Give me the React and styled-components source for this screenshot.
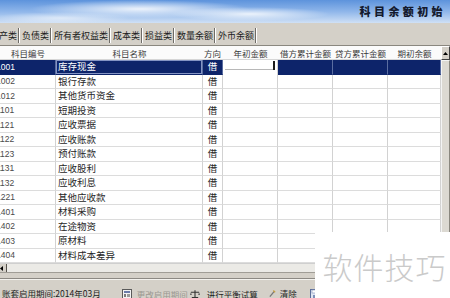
import React from "react";
import styled, { createGlobalStyle } from "styled-components";

const Global = createGlobalStyle`
  html, body { margin: 0; padding: 0; background: #d4d0c8; overflow: hidden; }
  * { box-sizing: border-box; }
`;

const CJK = `"Noto Sans CJK SC", "Noto Sans", sans-serif`;

const Window = styled.div`
  position: relative;
  width: 450px;
  height: 298px;
  overflow: hidden;
  display: flex;
  flex-direction: column;
  background: #d4d0c8;
  font-family: ${CJK};
`;

const Banner = styled.div`
  height: 23px;
  flex: none;
  display: flex;
  align-items: center;
  justify-content: flex-end;
  padding-right: 4px;
  background:
    radial-gradient(ellipse 110px 9px at 140px 9px, rgba(255,255,255,0.85), rgba(255,255,255,0) 100%),
    radial-gradient(ellipse 80px 7px at 250px 14px, rgba(255,255,255,0.8), rgba(255,255,255,0) 100%),
    radial-gradient(ellipse 70px 6px at 60px 18px, rgba(255,255,255,0.55), rgba(255,255,255,0) 100%),
    linear-gradient(180deg, #5d93dc 0%, #8fb6ea 50%, #cfe0f5 100%);
`;

const Title = styled.div`
  font-family: ${CJK};
  font-weight: 900;
  font-size: 11px;
  letter-spacing: 3.4px;
  color: #141a2e;
  line-height: 1;
`;

const TabBar = styled.div`
  height: 23px;
  flex: none;
  display: flex;
  align-items: flex-start;
  padding-top: 5px;
  border-bottom: 1px solid #8a877f;
`;

const Tab = styled.div`
  height: 15px;
  display: flex;
  align-items: center;
  padding: 0 ${(p) => (p.$first ? 1 : 1)}px 0 2px;
  font-size: 9px;
  color: #202020;
  white-space: nowrap;
  border-right: 1px solid #6e6b66;
  box-shadow: 1px 0 0 #ffffff;
  margin-right: 1px;
  overflow: hidden;
  span { margin-left: ${(p) => (p.$first ? "-12px" : "0")}; }
`;

const Body = styled.div`
  display: flex;
  flex: none;
  height: 217px;
`;

const Grid = styled.div`
  width: 441px;
  display: flex;
  flex-direction: column;
  background: #ffffff;
`;

const COLS = "56px 147px 20px 55px 55px 55px 53px";

const HeadRow = styled.div`
  height: 14px;
  display: grid;
  grid-template-columns: ${COLS};
  background: #fbfbfb;
  border-bottom: 1px solid #d6d6d6;
`;

const HeadCell = styled.div`
  font-size: 8.5px;
  color: #3a3a3a;
  display: flex;
  align-items: center;
  justify-content: ${(p) => (p.$right ? "flex-end" : "center")};
  padding-right: ${(p) => (p.$right ? "2px" : "0")};
  white-space: nowrap;
  overflow: hidden;
`;

const Row = styled.div`
  height: 14.5px;
  display: grid;
  grid-template-columns: ${COLS};
  background: ${(p) => (p.$sel ? "#0d246a" : "#ffffff")};
`;

const Cell = styled.div`
  border-right: 1px solid ${(p) => (p.$sel ? "#5a6da0" : "#d2d2d2")};
  border-bottom: 1px solid ${(p) => (p.$sel ? "#0d246a" : "#dcdcdc")};
  display: flex;
  align-items: center;
  justify-content: ${(p) => (p.$center ? "center" : "flex-start")};
  padding-left: ${(p) => (p.$pad ? 2 : 0)}px;
  font-size: 9.5px;
  color: ${(p) => (p.$sel ? "#ffffff" : "#262626")};
  white-space: nowrap;
  overflow: hidden;
  line-height: 1;
`;

const CodeCell = styled(Cell)`
  font-family: "Liberation Sans", Arial, sans-serif;
  font-size: 8.5px;
  color: ${(p) => (p.$sel ? "#ffffff" : "#4a4a4a")};
  span { margin-left: -4px; }
`;

const NameCell = styled(Cell)`
  box-shadow: ${(p) => (p.$sel ? "inset 0 0 0 1px #8494c4" : "none")};
`;

const EditCell = styled.div`
  background: #ffffff;
  border-right: 1px solid #d2d2d2;
  position: relative;
  &::after {
    content: "";
    position: absolute;
    right: 2px;
    top: 1px;
    width: 2px;
    height: 9px;
    background: #1b1b1b;
  }
  &::before {
    content: "";
    position: absolute;
    right: 2px;
    top: 9px;
    width: 50px;
    height: 1px;
    background: #b8b8b8;
  }
`;

const VScroll = styled.div`
  width: 9px;
  display: flex;
  flex-direction: column;
  background: #d4d0c8;
`;

const ScrollBtn = styled.div`
  height: 14px;
  background: #d4d0c8;
  border: 1px solid;
  border-color: #ffffff #404040 #404040 #ffffff;
  display: flex;
  align-items: center;
  justify-content: center;
`;

const Thumb = styled.div`
  flex: 1;
  background: #dcd9d2;
  border: 1px solid;
  border-color: #f4f4f4 #8a877f #8a877f #f4f4f4;
`;

const HScroll = styled.div`
  height: 10px;
  flex: none;
  display: flex;
  background: #ebeae6;
  border-top: 1px solid #cfcfcf;
  border-bottom: 1px solid #a09d96;
`;

const HBtn = styled.div`
  width: 7px;
  display: flex;
  align-items: center;
  border-right: 1px solid #55524c;
  background: #d4d0c8;
`;

const Gap = styled.div`
  height: 6px;
  flex: none;
  border-bottom: 1px solid #8c8983;
`;

const StatusBar = styled.div`
  flex: 1;
  display: flex;
  align-items: flex-start;
  padding: 9px 0 0 2px;
  border-top: 1px solid #f3f2ee;
  font-size: 8.5px;
  color: #1e1e1e;
  white-space: nowrap;
`;

const StatusItem = styled.div`
  display: flex;
  align-items: center;
  gap: ${(p) => p.$gap || 4}px;
  margin-left: ${(p) => p.$ml || 0}px;
  color: ${(p) => (p.$disabled ? "#9b9891" : "#1e1e1e")};
  line-height: 1;
`;

const Watermark = styled.div`
  position: absolute;
  left: 315px;
  top: 232px;
  right: 0;
  bottom: 0;
  background: #ffffff;
  display: flex;
  align-items: center;
  justify-content: center;
  padding-left: 4px;
  padding-top: 2px;
  font-family: "Noto Sans CJK SC", sans-serif;
  font-size: 30px;
  font-weight: 300;
  color: #cacaca;
  letter-spacing: 1px;
`;

const rows = [
  ["1001", "库存现金"],
  ["1002", "银行存款"],
  ["1012", "其他货币资金"],
  ["1101", "短期投资"],
  ["1121", "应收票据"],
  ["1122", "应收账款"],
  ["1123", "预付账款"],
  ["1131", "应收股利"],
  ["1132", "应收利息"],
  ["1221", "其他应收款"],
  ["1401", "材料采购"],
  ["1402", "在途物资"],
  ["1403", "原材料"],
  ["1404", "材料成本差异"],
];

const tabs = ["资产类", "负债类", "所有者权益类", "成本类", "损益类", "数量余额", "外币余额"];

export default function App() {
  return (
    <Window>
      <Global />
      <Banner>
        <Title>科目余额初始</Title>
      </Banner>
      <TabBar>
        {tabs.map((t, i) => (
          <Tab key={t} $first={i === 0}>
            <span>{t}</span>
          </Tab>
        ))}
      </TabBar>
      <Body>
        <Grid>
          <HeadRow>
            <HeadCell>科目编号</HeadCell>
            <HeadCell>科目名称</HeadCell>
            <HeadCell $right>方向</HeadCell>
            <HeadCell>年初金额</HeadCell>
            <HeadCell>借方累计金额</HeadCell>
            <HeadCell>贷方累计金额</HeadCell>
            <HeadCell>期初余额</HeadCell>
          </HeadRow>
          {rows.map(([code, name], i) => {
            const sel = i === 0;
            return (
              <Row key={code} $sel={sel}>
                <CodeCell $sel={sel}>
                  <span>{code}</span>
                </CodeCell>
                <NameCell $sel={sel} $pad>
                  {name}
                </NameCell>
                <Cell $sel={sel} $center>
                  借
                </Cell>
                {sel ? <EditCell /> : <Cell />}
                <Cell $sel={sel} />
                <Cell $sel={sel} />
                <Cell $sel={sel} />
              </Row>
            );
          })}
        </Grid>
        <VScroll>
          <ScrollBtn>
            <svg width="5" height="3" viewBox="0 0 5 3">
              <path d="M0 3 L2.5 0 L5 3 Z" fill="#000" />
            </svg>
          </ScrollBtn>
          <Thumb />
        </VScroll>
      </Body>
      <HScroll>
        <HBtn>
          <svg width="4" height="5" viewBox="0 0 4 5">
            <path d="M0 2.5 L3 0 L3 5 Z" fill="#000" />
          </svg>
        </HBtn>
      </HScroll>
      <Gap />
      <StatusBar>
        <StatusItem>账套启用期间:2014年03月</StatusItem>
        <StatusItem $ml={21} $disabled $gap={5}>
          <svg width="10" height="10" viewBox="0 0 10 10">
            <rect x="0.5" y="0.5" width="9" height="9" fill="#f2f2f2" stroke="#5a5a5a" />
            <rect x="2" y="2" width="6" height="2" fill="#6a7aa8" />
            <rect x="2" y="5" width="2" height="3" fill="#7a7a7a" />
            <rect x="5" y="5" width="3" height="3" fill="#9a9a9a" />
          </svg>
          更改启用期间
        </StatusItem>
        <StatusItem $ml={2} $gap={7}>
          <svg width="10" height="10" viewBox="0 0 11 10">
            <path d="M5.5 1 V9 M2 9 H9 M1 3 H10" stroke="#333" strokeWidth="1.2" fill="none" />
            <path d="M1 3 L0 6 H2 Z M10 3 L9 6 H11 Z" fill="#555" />
          </svg>
          进行平衡试算
        </StatusItem>
        <StatusItem $ml={11} $gap={4}>
          <svg width="7" height="9" viewBox="0 0 8 9">
            <path d="M1 8 L6 2" stroke="#777" strokeWidth="1.5" />
            <path d="M5 1 L7 3" stroke="#c9a040" strokeWidth="1.5" />
          </svg>
          清除
        </StatusItem>
        <StatusItem $ml={13}>
          <svg width="10" height="10" viewBox="0 0 10 10">
            <rect x="0.5" y="0.5" width="9" height="9" fill="#dfe6f2" stroke="#5d6f9a" />
            <rect x="2" y="1" width="6" height="3" fill="#ffffff" stroke="#8090b8" strokeWidth="0.6" />
            <rect x="3" y="6" width="4" height="3" fill="#8090b8" />
          </svg>
        </StatusItem>
      </StatusBar>
      <Watermark>软件技巧</Watermark>
    </Window>
  );
}
